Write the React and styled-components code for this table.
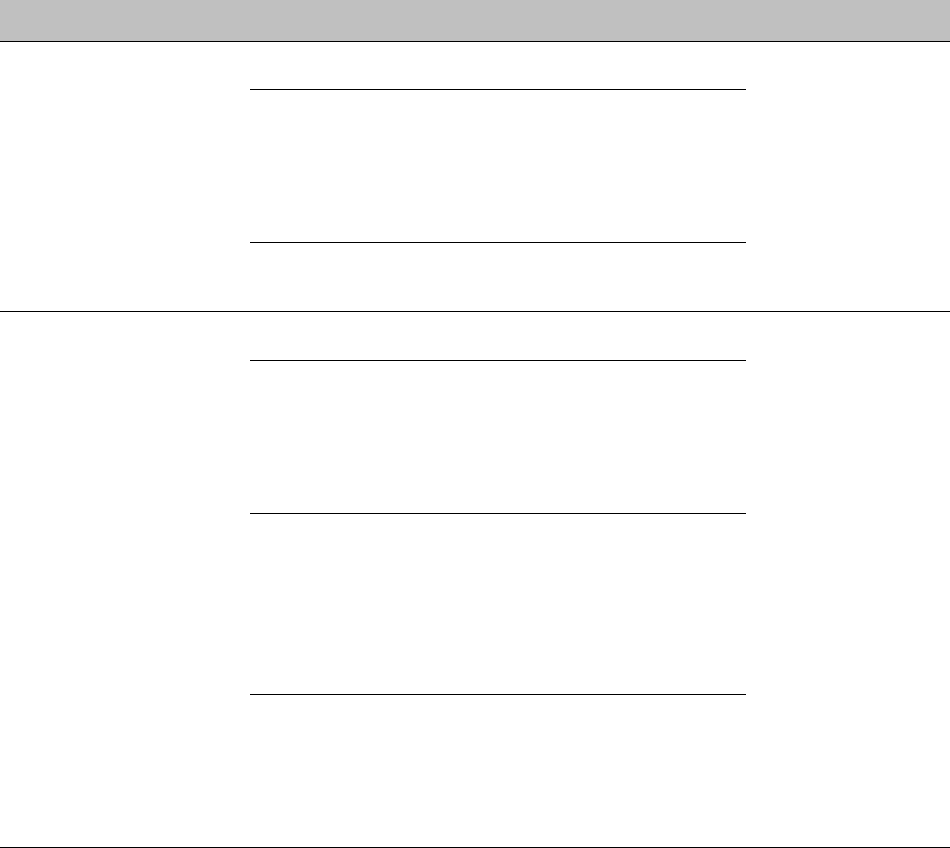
import React from 'react';
import styled, { createGlobalStyle } from 'styled-components';

const GlobalStyle = createGlobalStyle`
  html, body {
    margin: 0;
    padding: 0;
    background: #fff;
    font-family: "Liberation Sans", Arial, sans-serif;
  }
`;

const sections = [
  { top: 48 - 1, gaps: [152], bottom: 68 },
  { top: 48, gaps: [152, 180], bottom: 152 },
];

const App = () => {
  return (
    <Page>
      <GlobalStyle />
      <HeaderBar />
      {sections.map((s, i) => (
        <Section key={i} $top={s.top} $bottom={s.bottom}>
          {s.gaps.concat([0]).map((g, j) => (
            <Rule key={j} $gap={g} />
          ))}
        </Section>
      ))}
    </Page>
  );
};

const Page = styled.div`
  width: 950px;
  display: flex;
  flex-direction: column;
`;

const HeaderBar = styled.div`
  height: 41px;
  background-color: #c0c0c0;
  border-bottom: 1px solid #000;
`;

const Section = styled.div`
  display: flex;
  flex-direction: column;
  padding-top: ${(p) => p.$top}px;
  padding-bottom: ${(p) => p.$bottom}px;
  border-bottom: 1px solid #000;
`;

const Rule = styled.div`
  width: 496px;
  height: 1px;
  margin-left: 250px;
  margin-bottom: ${(p) => p.$gap}px;
  background-color: #000;
`;

export default App;
